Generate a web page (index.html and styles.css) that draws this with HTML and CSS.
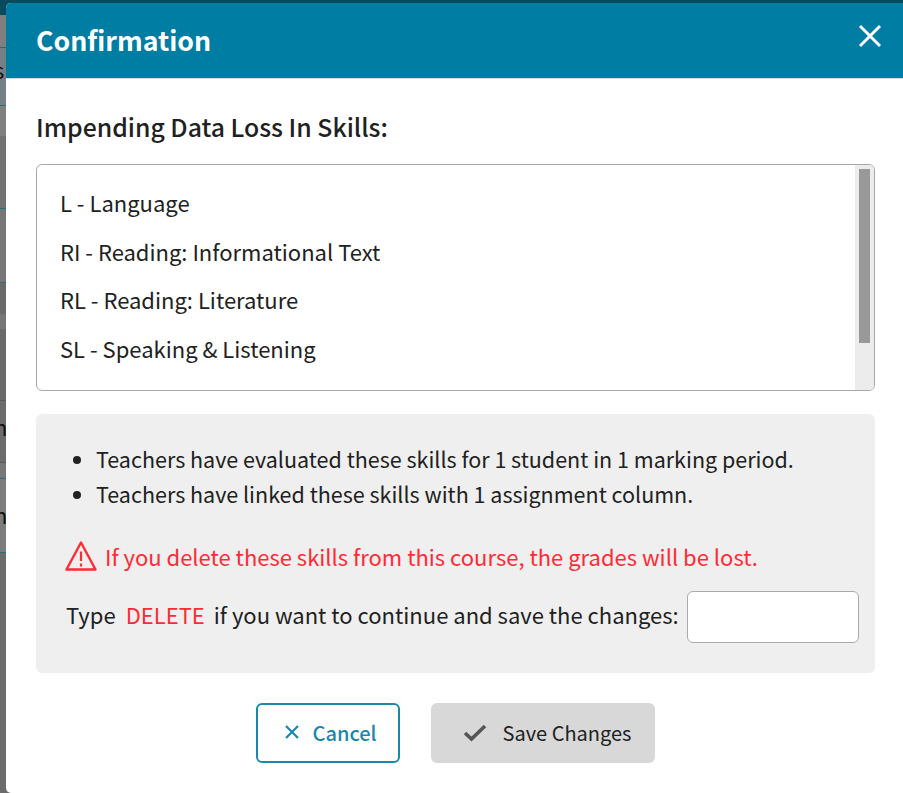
FILE: index.html
```html
<!DOCTYPE html>
<html lang="en">
<head>
<meta charset="utf-8">
<title>Confirmation</title>
<link rel="stylesheet" href="styles.css">
</head>
<body>
<div class="backdrop">
  <div class="bg-row bg-top"></div>
  <div class="bg-row bg-r1"></div>
  <div class="bg-row bg-r2"><span class="bg-text">s</span></div>
  <div class="bg-row bg-r3a"></div>
  <div class="bg-row bg-r3"></div>
  <div class="bg-row bg-r4"></div>
  <div class="bg-row bg-r5"></div>
  <div class="bg-row bg-r5b"></div>
  <div class="bg-row bg-r5c"></div>
  <div class="bg-row bg-r6"><span class="bg-text">n</span></div>
  <div class="bg-row bg-r7"></div>
  <div class="bg-row bg-r8"><span class="bg-text">n</span></div>
  <div class="bg-row bg-r9"></div>
</div>
<div class="modal" role="dialog">
  <header class="modal-head">
    <h1 class="modal-title">Confirmation</h1>
    <svg class="close-icon" viewBox="0 0 24 24" width="24" height="24"><path d="M2 2 22 22M22 2 2 22" fill="none" stroke="#fff" stroke-width="3"/></svg>
  </header>
  <div class="modal-body">
    <h2 class="section-title">Impending Data Loss In Skills:</h2>
    <div class="skills-box">
      <ul class="skills-list">
        <li>L - Language</li>
        <li>RI - Reading: Informational Text</li>
        <li>RL - Reading: Literature</li>
        <li>SL - Speaking &amp; Listening</li>
      </ul>
      <div class="scrolltrack"><div class="scrollthumb"></div></div>
    </div>
    <div class="notice">
      <ul class="notice-list">
        <li>Teachers have evaluated these skills for 1 student in 1 marking period.</li>
        <li>Teachers have linked these skills with 1 assignment column.</li>
      </ul>
      <p class="warning">
        <svg class="warn-icon" viewBox="0 0 32 30" width="32" height="30"><path d="M16 1.5 30.5 28.5H1.5Z" fill="none" stroke="#ff2a36" stroke-width="2.4" stroke-linejoin="round"/><path d="M16 10.5V20M16 22.5V25.5" fill="none" stroke="#ff2a36" stroke-width="2.2"/></svg>
        <span>If you delete these skills from this course, the grades will be lost.</span>
      </p>
      <div class="type-row">
        <span>Type</span><span class="del-word">DELETE</span><span>if you want to continue and save the changes:</span>
        <input class="type-input" type="text" aria-label="Type DELETE">
      </div>
    </div>
    <div class="actions">
      <button class="btn btn-cancel" type="button">
        <svg viewBox="0 0 16 16" width="16" height="16"><path d="M2 2 14 14M14 2 2 14" fill="none" stroke="#1a87ab" stroke-width="2.2"/></svg>
        Cancel
      </button>
      <button class="btn btn-save" type="button">
        <svg viewBox="0 0 24 19" width="24" height="19"><path d="M2 10 8.5 16 22 3" fill="none" stroke="#555" stroke-width="3.6"/></svg>
        Save Changes
      </button>
    </div>
  </div>
</div>
</body>
</html>
```
FILE: styles.css
```css
* { box-sizing: border-box; }
html, body { margin: 0; padding: 0; height: 100%; overflow: hidden; }
body { font-family: "Noto Sans CJK SC", "Noto Sans", sans-serif; color: #212121; background: #6c6c6c; width: 903px; height: 793px; position: relative; }

.backdrop { display: flex; flex-direction: column; height: 793px; }
.bg-row { flex: none; overflow: hidden; font-size: 22px; line-height: 1; color: #111; border-bottom: 1px solid #2b6a7c; }
.bg-top { height: 15px; background: #0a4a5e; border-bottom: 0; }
.bg-r1 { height: 33px; background: #7f7f7f; }
.bg-r2 { height: 58px; background: #748083; padding-top: 10px; }
.bg-r3a { height: 30px; background: #808080; border-bottom: 0; }
.bg-r3 { height: 73px; background: #727272; }
.bg-r4 { height: 74px; background: #777; }
.bg-r5 { height: 31px; background: #6a6a6a; border-bottom: 0; }
.bg-r5b { height: 15px; background: #767676; border-bottom: 0; }
.bg-r5c { height: 72px; background: #6a6a6a; border-bottom-color: #585858; }
.bg-r6 { height: 62px; background: #6c6c6c; border-bottom-color: #585858; padding-top: 14px; }
.bg-r7 { height: 16px; background: #777; }
.bg-r8 { height: 74px; background: #7c7c7c; padding-top: 24px; }
.bg-r9 { height: 240px; background: #6c6c6c; border-bottom: 0; }
.bg-text { display: block; margin-left: -6px; }

.modal { position: absolute; left: 6px; top: 3px; width: 897px; height: 790px; background: #fff; border-radius: 5px 0 0 5px; display: flex; flex-direction: column; }
.modal-head { flex: none; height: 76px; background: #007da3; border-bottom: 1px solid #cfd8dc; border-radius: 5px 0 0 0; display: flex; justify-content: space-between; padding: 19px 21px 0 30px; }
.modal-title { margin: 0; font-size: 26.7px; line-height: 36px; font-weight: 700; color: #fff; }
.close-icon { margin-top: 2px; }

.modal-body { flex: 1; padding: 0 28px 0 30px; display: flex; flex-direction: column; }
.section-title { margin: 31px 0 0; font-size: 24.8px; line-height: 32px; font-weight: 500; color: #212121; }
.skills-box { margin-top: 22px; height: 227px; border: 1px solid #a8a8a8; border-radius: 6px; display: flex; justify-content: space-between; overflow: hidden; }
.skills-list { list-style: none; margin: 0; padding: 13px 23px; font-size: 22px; }
.skills-list li { height: 48.7px; line-height: 48.7px; white-space: nowrap; }
.scrolltrack { width: 19px; background: #ececec; padding: 4px 4px 0; }
.scrollthumb { width: 11px; height: 174px; background: #999; }

.notice { margin-top: 23px; height: 259px; background: #efefef; border-radius: 6px; padding: 27px 16px 0 30px; font-size: 22px; }
.notice-list { margin: 0; padding: 0 0 0 30px; line-height: 35px; font-size: 21.5px; }
.warning { margin: 30px 0 0 -1px; display: flex; align-items: center; color: #ff2a36; line-height: 30px; gap: 8px; }
.warn-icon { flex: none; }
.type-row { display: flex; align-items: flex-start; line-height: 52px; margin-top: 17px; white-space: pre; }
.del-word { color: #ff2a36; margin: 0 9px 0 10px; }
.type-input { margin: 3px 0 0 8px; width: 172px; height: 52px; border: 1px solid #aaa; border-radius: 6px; background: #fff; }

.actions { display: flex; justify-content: center; gap: 31px; margin-top: 30px; }
.btn { font-family: inherit; font-size: 20px; height: 60px; border-radius: 6px; display: flex; align-items: center; justify-content: center; cursor: pointer; padding: 0 0 2px; }
.btn-cancel { width: 144px; background: #fff; border: 2px solid #1a87ab; color: #1a87ab; font-weight: 500; gap: 13px; padding-left: 4px; }
.btn-save { width: 224px; background: #d8d8d8; border: 0; color: #212121; gap: 16px; padding-left: 8px; }
```
